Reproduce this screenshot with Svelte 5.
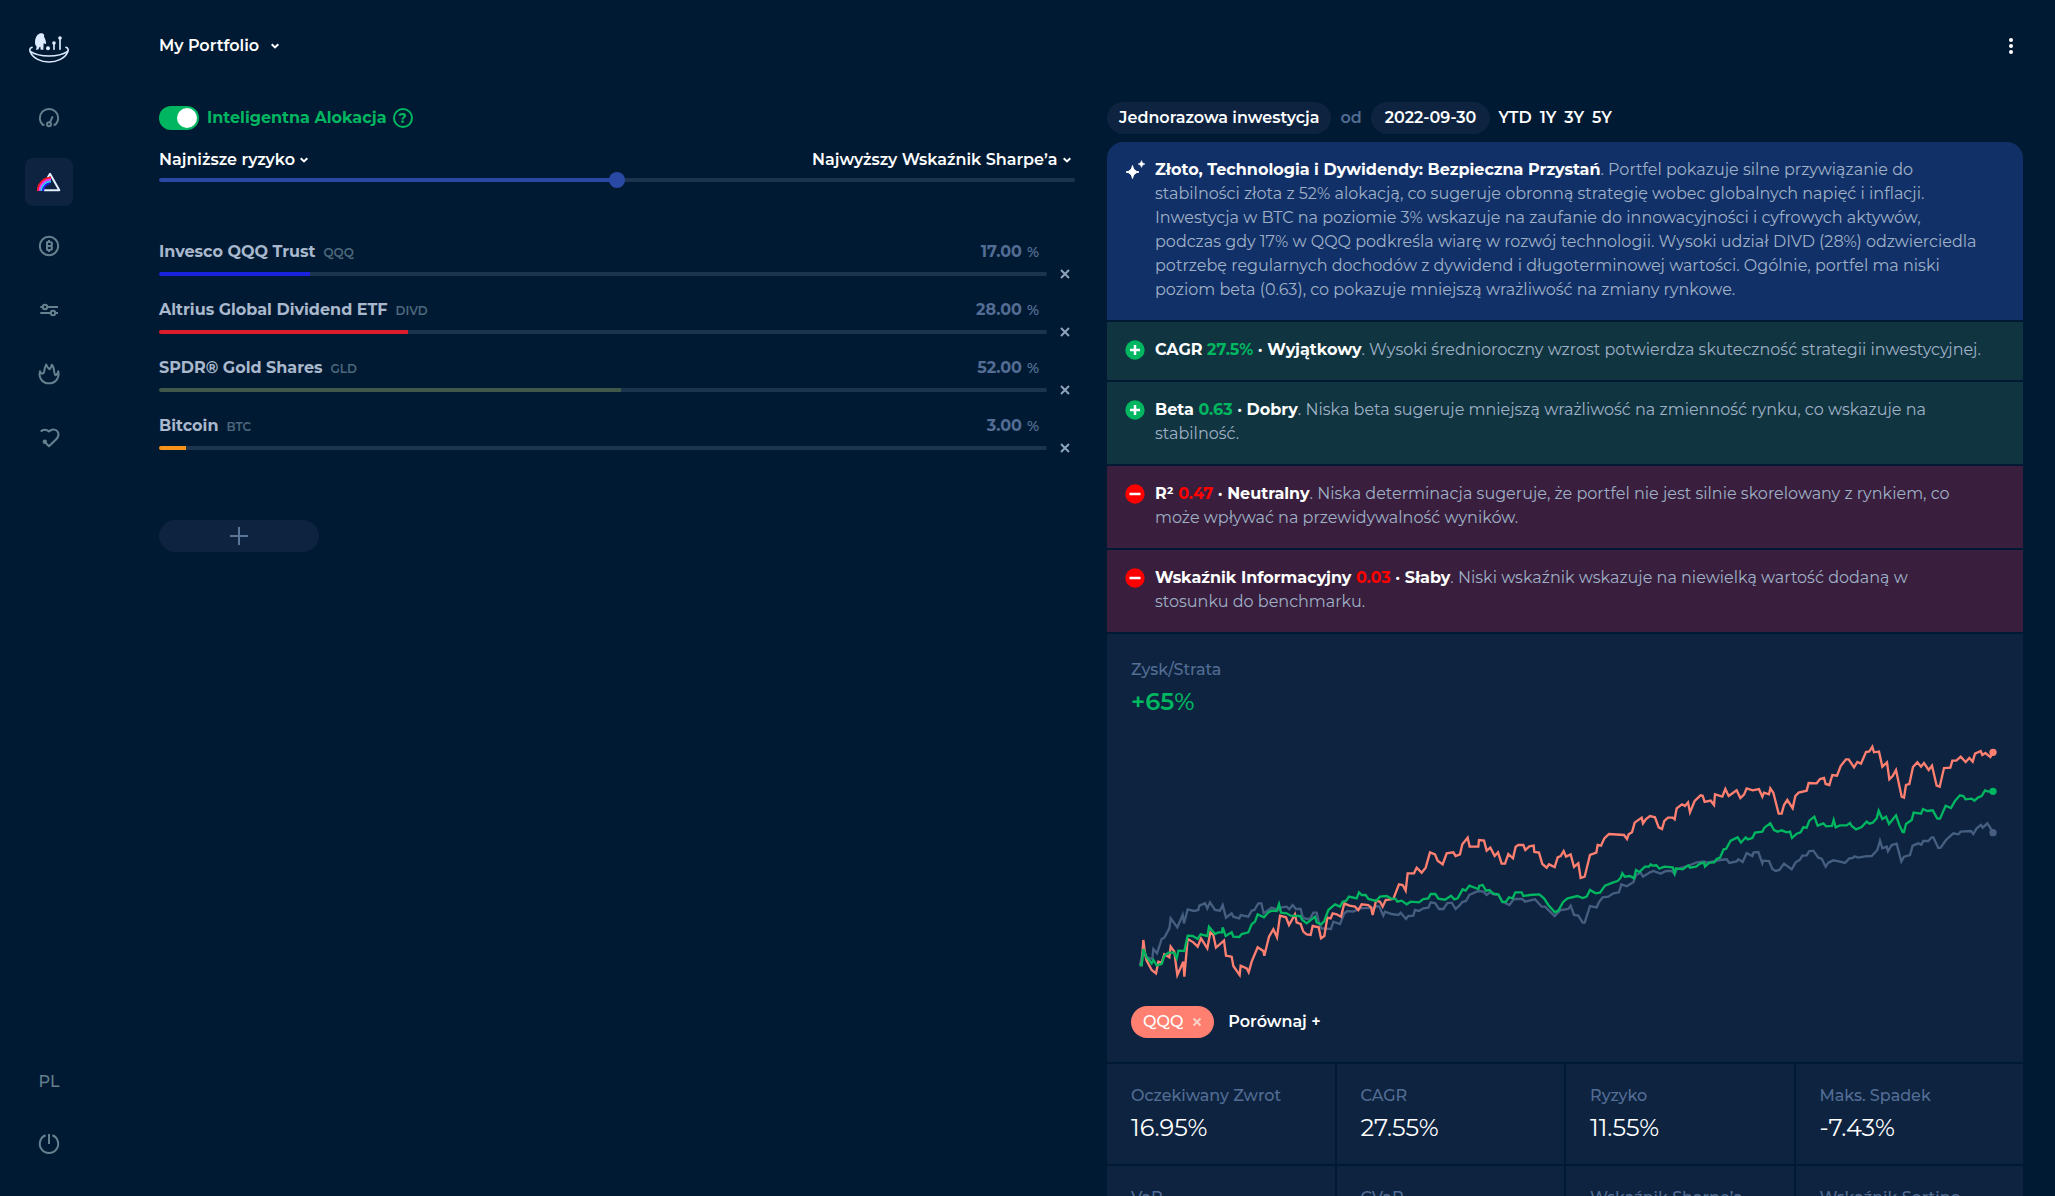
<script>
  let smart = $state(true);
  let risk = $state(50);

  let assets = $state([
    { name: 'Invesco QQQ Trust', ticker: 'QQQ', share: 17, color: '#1a22dd' },
    { name: 'Altrius Global Dividend ETF', ticker: 'DIVD', share: 28, color: '#dd1c2c' },
    { name: 'SPDR® Gold Shares', ticker: 'GLD', share: 52, color: '#3f5847' },
    { name: 'Bitcoin', ticker: 'BTC', share: 3, color: '#f7931a' }
  ]);

  const ranges = ['YTD', '1Y', '3Y', '5Y'];

  const summary = [
    'stabilności złota z 52% alokacją, co sugeruje obronną strategię wobec globalnych napięć i inflacji.',
    'Inwestycja w BTC na poziomie 3% wskazuje na zaufanie do innowacyjności i cyfrowych aktywów,',
    'podczas gdy 17% w QQQ podkreśla wiarę w rozwój technologii. Wysoki udział DIVD (28%) odzwierciedla',
    'potrzebę regularnych dochodów z dywidend i długoterminowej wartości. Ogólnie, portfel ma niski',
    'poziom beta (0.63), co pokazuje mniejszą wrażliwość na zmiany rynkowe.'
  ];

  const insights = [
    { good: true, metric: 'CAGR', value: '27.5%', grade: 'Wyjątkowy', first: 'Wysoki średnioroczny wzrost potwierdza skuteczność strategii inwestycyjnej.', second: '' },
    { good: true, metric: 'Beta', value: '0.63', grade: 'Dobry', first: 'Niska beta sugeruje mniejszą wrażliwość na zmienność rynku, co wskazuje na', second: 'stabilność.' },
    { good: false, metric: 'R²', value: '0.47', grade: 'Neutralny', first: 'Niska determinacja sugeruje, że portfel nie jest silnie skorelowany z rynkiem, co', second: 'może wpływać na przewidywalność wyników.' },
    { good: false, metric: 'Wskaźnik Informacyjny', value: '0.03', grade: 'Słaby', first: 'Niski wskaźnik wskazuje na niewielką wartość dodaną w', second: 'stosunku do benchmarku.' }
  ];

  const metrics = [
    { label: 'Oczekiwany Zwrot', value: '16.95%' },
    { label: 'CAGR', value: '27.55%' },
    { label: 'Ryzyko', value: '11.55%' },
    { label: 'Maks. Spadek', value: '-7.43%' },
    { label: 'VaR', value: '' },
    { label: 'CVaR', value: '' },
    { label: 'Wskaźnik Sharpe’a', value: '' },
    { label: 'Wskaźnik Sortino', value: '' }
  ];

  const series = [
    {
      color: '#465f80', end: [2619, 338],
      points: '60,735 70,690 80,712 97,717 100,687 111,700 125,657 133,653 148,625 152,595 172,622 188,585 192,610 203,568 222,573 235,570 238,557 255,550 262,565 270,547 285,570 300,572 308,555 318,593 335,580 340,590 358,595 362,585 385,590 395,572 403,570 415,550 424,550 431,580 455,563 475,570 485,562 500,560 508,568 518,555 528,567 542,567 548,592 560,597 570,597 580,578 590,578 597,610 605,625 633,627 640,605 660,612 673,580 682,573 700,575 720,565 765,563 770,558 778,560 790,587 795,575 815,582 835,585 842,578 858,597 865,588 880,587 885,570 897,573 910,565 925,563 932,547 945,549 957,567 970,567 982,549 995,548 1007,567 1018,557 1027,546 1038,543 1048,525 1075,513 1090,515 1100,525 1110,517 1120,523 1135,525 1147,545 1168,555 1182,537 1207,537 1215,545 1245,538 1265,560 1275,560 1304,588 1322,570 1345,567 1352,557 1362,585 1375,587 1388,608 1394,608 1410,558 1430,562 1436,548 1448,532 1465,530 1480,520 1497,517 1504,493 1520,499 1540,487 1548,465 1562,458 1569,470 1590,457 1600,453 1622,461 1638,453 1655,453 1664,463 1670,448 1710,435 1730,427 1752,424 1760,428 1800,420 1820,418 1828,429 1850,424 1855,418 1868,426 1880,399 1897,408 1901,397 1915,396 1927,430 1930,422 1947,423 1957,447 1967,453 1978,450 1992,431 2015,448 2027,427 2040,419 2047,407 2060,406 2067,394 2080,392 2095,413 2105,416 2117,440 2125,428 2140,421 2160,425 2175,429 2187,416 2198,414 2203,409 2215,413 2235,409 2255,408 2272,390 2280,362 2287,385 2300,380 2304,394 2315,375 2330,371 2344,425 2352,410 2370,405 2378,377 2395,370 2404,374 2410,363 2425,363 2435,352 2440,352 2455,384 2462,383 2478,360 2500,340 2515,343 2522,335 2553,333 2560,342 2570,325 2583,315 2588,323 2602,310 2612,325 2619,338'
    },
    {
      color: '#ff8070', end: [2619, 97],
      points: '60,735 65,735 70,660 75,700 80,722 95,750 108,760 115,725 125,728 133,703 148,712 152,680 163,695 168,735 172,765 190,725 193,770 203,657 220,667 233,680 243,655 262,685 271,637 280,645 288,683 312,662 318,707 335,710 340,738 359,765 362,737 380,745 386,757 395,725 413,682 430,693 433,707 447,650 460,628 471,652 480,587 498,592 507,615 525,583 530,608 542,612 550,635 560,643 572,645 578,618 596,622 603,655 613,648 622,593 632,595 638,580 650,583 663,590 673,550 688,557 705,560 715,570 725,553 745,555 753,562 758,585 768,542 780,545 788,560 797,540 820,537 837,493 848,495 857,512 863,460 882,460 890,443 905,458 917,443 930,397 945,403 953,422 968,433 980,400 1000,397 1007,408 1020,403 1027,373 1043,353 1049,380 1075,380 1077,360 1092,362 1100,392 1111,383 1124,408 1134,397 1145,431 1155,431 1165,402 1179,415 1187,380 1195,375 1210,375 1216,390 1228,379 1241,377 1243,396 1257,398 1267,432 1280,443 1287,433 1304,441 1313,412 1322,408 1331,393 1338,410 1352,403 1362,441 1375,430 1382,474 1394,470 1410,405 1429,398 1433,375 1443,377 1453,355 1467,342 1512,345 1521,357 1526,343 1536,337 1544,308 1565,293 1569,310 1578,297 1590,288 1605,292 1616,322 1626,327 1633,303 1644,293 1658,293 1664,298 1670,265 1686,253 1695,258 1704,247 1710,277 1724,243 1742,226 1748,227 1754,246 1772,242 1782,255 1785,223 1807,230 1816,207 1826,228 1850,211 1861,234 1872,224 1880,205 1898,211 1917,207 1927,230 1932,218 1947,223 1951,205 1960,218 1976,281 1985,281 1992,255 2002,240 2018,265 2026,228 2036,218 2060,212 2066,189 2090,190 2100,177 2112,174 2117,192 2128,195 2137,165 2151,167 2162,138 2178,118 2186,118 2202,142 2212,126 2223,131 2238,96 2248,94 2257,80 2262,97 2277,95 2287,140 2301,127 2308,178 2318,168 2328,150 2345,230 2352,233 2358,195 2368,192 2379,141 2392,127 2403,140 2412,129 2426,150 2436,137 2450,197 2459,200 2472,144 2491,143 2497,122 2509,122 2522,110 2537,126 2548,114 2558,125 2565,101 2582,93 2587,105 2596,99 2611,111 2619,97'
    },
    {
      color: '#00b660', end: [2619, 214],
      points: '58,735 65,735 70,687 80,712 95,730 100,720 110,736 125,732 133,708 145,698 162,698 170,715 175,692 193,693 203,647 218,648 233,657 242,643 262,648 267,620 285,642 295,637 306,637 308,622 317,648 335,637 340,650 358,651 365,642 385,637 395,613 405,605 413,583 432,592 445,577 455,572 470,573 477,552 483,578 500,580 512,587 540,588 547,600 560,610 585,590 590,607 603,613 613,603 625,570 645,553 660,560 668,545 678,543 687,530 710,535 717,517 725,525 737,525 745,537 768,543 780,530 800,528 812,535 827,537 832,545 845,542 860,553 872,545 897,547 910,537 925,535 932,522 946,522 955,536 975,539 993,527 1003,538 1013,535 1028,508 1037,512 1048,497 1075,507 1078,497 1088,495 1098,512 1108,510 1120,521 1135,523 1147,546 1158,545 1167,532 1178,535 1186,517 1205,517 1210,528 1230,525 1258,523 1272,535 1285,555 1305,577 1315,572 1330,545 1343,535 1372,528 1388,534 1400,530 1410,510 1427,520 1440,518 1455,497 1480,487 1493,483 1502,473 1507,460 1514,470 1530,468 1542,475 1548,450 1558,456 1575,440 1587,440 1592,433 1597,437 1609,436 1618,446 1633,440 1658,442 1664,460 1668,445 1688,448 1705,436 1710,443 1728,440 1740,431 1752,428 1755,440 1768,428 1783,427 1790,417 1800,413 1811,388 1818,387 1832,362 1853,352 1863,368 1877,352 1883,358 1897,354 1905,338 1927,335 1933,323 1951,310 1962,330 1973,335 1985,331 2000,337 2010,335 2016,354 2030,341 2042,337 2050,322 2060,323 2068,302 2083,290 2093,317 2110,310 2118,319 2136,318 2141,300 2147,322 2160,316 2180,316 2190,309 2195,318 2208,328 2225,321 2240,305 2248,311 2258,308 2270,295 2276,272 2287,297 2298,290 2307,312 2315,302 2328,286 2338,315 2348,336 2352,336 2358,312 2375,300 2381,278 2403,281 2409,267 2422,273 2438,271 2452,296 2460,296 2477,257 2493,264 2505,243 2520,226 2530,228 2537,238 2555,236 2563,242 2575,232 2585,228 2595,211 2605,215 2619,214'
    }
  ];
</script>

{#snippet chevron()}
  <svg class="chevron" viewBox="0 0 10 8" aria-hidden="true"><path d="M1.7 2.2 5 5.4 8.3 2.2" /></svg>
{/snippet}

<div class="shell">
  <aside class="side">
    <a class="logo" href="#home" aria-label="Home">
      <svg viewBox="0 0 120 90" aria-hidden="true">
        <g fill="none" stroke="currentColor" stroke-width="5" stroke-linecap="round">
          <path d="M9 43C3 44 1 50 4 57C12 76 36 87 60 87S108 76 116 57C119 50 117 44 111 43" />
          <path d="M5 56C20 66 38 69 60 69S100 66 115 56" />
          <path d="M75 32V49M93 17V49" />
        </g>
        <g fill="currentColor">
          <path d="M18 26C19 11 26 3 35 1C43-1 47 4 45 11C49 18 52 26 51 33L44 31L43 50H35L34 41C31 42 29 45 29 49L21 51L23 41C19 37 18 32 18 26Z" />
          <circle cx="57" cy="46" r="6" /><circle cx="75" cy="30" r="5.500" /><circle cx="93" cy="15" r="5.500" />
        </g>
      </svg>
    </a>
    <nav class="nav" aria-label="Menu">
      <a href="#overview" aria-label="Overview">
        <svg viewBox="0 0 24 24"><path d="M7.500 18.700H5.600A9.200 9.200 0 1 1 18.400 18.700H16.500M13 16.300 15.700 10.300" /><circle cx="12" cy="18.300" r="2" /></svg>
      </a>
      <a class="active" href="#portfolio" aria-label="Portfolio" aria-current="page">
        <svg viewBox="0 0 24 24">
          <path stroke="#e4efff" stroke-width="2" d="M10.500 8 13 3.800 22.300 20.200H7" />
          <path stroke="#ff1725" d="M.8 21A13.200 13.200 0 0 1 14 7.800" />
          <path stroke="#f23cf4" d="M2.600 21A11.400 11.400 0 0 1 14 9.600" />
          <path stroke="#35c8ff" d="M4.400 21A9.600 9.600 0 0 1 14 11.400" />
          <path stroke="#2018e8" d="M6.200 21A7.800 7.800 0 0 1 13 13.200" />
        </svg>
      </a>
      <a href="#crypto" aria-label="Crypto">
        <svg viewBox="0 0 24 24"><circle cx="12" cy="12" r="9.200" /><path d="M10 8H13A2 2 0 0 1 13 12H10M13 12A2 2 0 0 1 13 16H10M10 7.500V16.500M12 6V8M12 16V18" /></svg>
      </a>
      <a href="#filters" aria-label="Filters">
        <svg viewBox="0 0 24 24"><path d="M3.300 9H5.800M10.200 9H21M3.300 15H13.800M18.200 15H21" /><circle cx="8" cy="9" r="2.200" /><circle cx="16" cy="15" r="2.200" /></svg>
      </a>
      <a href="#trending" aria-label="Trending">
        <svg viewBox="0 0 24 24"><path d="M3 9.200C1.300 16 5.500 21.300 12 21.300S22.700 16 21.300 9.200C21 11.500 20.200 12.800 18.500 13.200C17.200 12.800 17.200 9 16.600 6C16.200 4.600 15.500 3.600 14.800 2.700C14.500 4.500 13.800 6 12.500 7.200C11 6 10 4.500 9.200 2.500C8.600 4.400 7.600 5.800 7.400 8C7.300 10 7 11.500 5.500 11.600C4.200 11.600 3.400 10.600 3 9.200Z" /></svg>
      </a>
      <a href="#favourites" aria-label="Favourites">
        <svg viewBox="0 0 24 24"><path d="M3.700 5.500C6 3 9.500 3 12 5.500C15 2.500 20 3 21.300 7C22 9.500 21 11.500 19 13.500L12 20.300 8.500 16.700" /><circle cx="7.800" cy="15.800" r="1.200" fill="currentColor" /></svg>
      </a>
    </nav>
    <div class="side-end">
      <button class="side-button" type="button">PL</button>
      <button class="side-button" type="button" aria-label="Log out">
        <svg viewBox="0 0 24 24"><path d="M8.600 3.300A9.200 9.200 0 1 0 15.400 3.300M12 2V12" /></svg>
      </button>
    </div>
  </aside>

  <main>
    <header class="topbar">
      <label class="picker wide">
        <select aria-label="Portfolio"><option>My Portfolio</option></select>
        {@render chevron()}
      </label>
      <button class="more" type="button" aria-label="More">
        <svg viewBox="0 0 24 24" fill="currentColor"><circle cx="12" cy="6" r="2" /><circle cx="12" cy="12" r="2" /><circle cx="12" cy="18" r="2" /></svg>
      </button>
    </header>

    <div class="columns">
      <section class="allocation">
        <div class="smart">
          <input id="smart" class="switch" type="checkbox" bind:checked={smart} />
          <label for="smart">Inteligentna Alokacja</label>
          <button class="help" type="button">?</button>
        </div>

        <div class="goals">
          <label class="picker">
            <select aria-label="Minimum"><option>Najniższe ryzyko</option></select>
            {@render chevron()}
          </label>
          <label class="picker">
            <select aria-label="Maximum"><option>Najwyższy Wskaźnik Sharpe’a</option></select>
            {@render chevron()}
          </label>
        </div>
        <input class="range main-range" type="range" min="0" max="100" bind:value={risk} style="--fill: {risk}%" aria-label="Ryzyko" />

        <ul class="assets">
          {#each assets as asset}
            <li>
              <div class="asset-head">
                <span class="asset-name">{asset.name}</span>
                <span class="ticker">{asset.ticker}</span>
                <input class="share" type="text" value={asset.share.toFixed(2)} aria-label="{asset.name} %" />
                <span class="percent">%</span>
              </div>
              <div class="asset-bar">
                <input class="range" type="range" min="0" max="100" bind:value={asset.share} style="--fill: {asset.share}%; --tone: {asset.color}" aria-label={asset.name} />
                <button class="remove" type="button" aria-label="Remove {asset.name}">
                  <svg viewBox="0 0 20 20"><path d="M6 6 14 14M14 6 6 14" /></svg>
                </button>
              </div>
            </li>
          {/each}
        </ul>

        <button class="add" type="button" aria-label="Add">
          <svg viewBox="0 0 20 20"><path d="M10 1V19M1 10H19" /></svg>
        </button>
      </section>

      <section class="report">
        <div class="filters">
          <button class="pill" type="button">Jednorazowa inwestycja</button>
          <span class="from">od</span>
          <button class="pill date" type="button">2022-09-30</button>
          <div class="ranges">
            {#each ranges as item}
              <button type="button">{item}</button>
            {/each}
          </div>
        </div>

        <div class="panels">
          <article class="note summary">
            <svg class="mark" viewBox="0 0 20 20" fill="#fff" aria-hidden="true">
              <path d="M7.500 5.500Q8.300 11.200 14 12Q8.300 12.800 7.500 18.500Q6.700 12.800 1 12Q6.700 11.200 7.500 5.500Z" stroke="#fff" />
              <path d="M16.500.500Q17 3.500 20 4Q17 4.500 16.500 7.500Q16 4.500 13 4Q16 3.500 16.500.500Z" stroke="#fff" stroke-width=".5" />
            </svg>
            <p>
              <strong>Złoto, Technologia i Dywidendy: Bezpieczna Przystań</strong>. Portfel pokazuje silne przywiązanie do
              {#each summary as line}<br />{line}{/each}
            </p>
          </article>

          {#each insights as item}
            <article class="note" class:good={item.good} class:bad={!item.good}>
              <svg class="mark" viewBox="0 0 20 20" aria-hidden="true">
                <circle cx="10" cy="10" r="9.700" fill="currentColor" />
                <path d={item.good ? 'M10 5V15M5 10H15' : 'M4.500 10H15.500'} stroke="#fff" stroke-width="2.500" />
              </svg>
              <p>
                <strong>{item.metric} <em>{item.value}</em> · {item.grade}</strong>. {item.first}
                {#if item.second}<br />{item.second}{/if}
              </p>
            </article>
          {/each}

          <article class="profit">
            <h2>Zysk/Strata</h2>
            <p class="gain"><b>+65</b>%</p>
            <svg class="chart" viewBox="33 0 2604 840" role="img" aria-label="Zysk/Strata">
              {#each series as line}
                <polyline points={line.points} stroke={line.color} />
                <circle cx={line.end[0]} cy={line.end[1]} r="11" fill={line.color} />
              {/each}
            </svg>
            <div class="compare">
              <button class="chip" type="button">
                QQQ
                <svg viewBox="0 0 10 10"><path d="M1.500 1.500 8.500 8.500M8.500 1.500 1.500 8.500" /></svg>
              </button>
              <button class="compare-add" type="button">Porównaj +</button>
            </div>
          </article>

          <dl class="metrics">
            {#each metrics as metric}
              <div>
                <dt>{metric.label}</dt>
                <dd>{metric.value}</dd>
              </div>
            {/each}
          </dl>
        </div>
      </section>
    </div>
  </main>
</div>

<style>
  :global(body) {
    margin: 0;
    background: #001a33;
  }
  .shell {
    display: flex;
    height: 100vh;
    overflow: hidden;
    background: #001a33;
    color: #fff;
    font-family: Montserrat, Inter, 'Open Sans', sans-serif;
    font-size: 16px;
    line-height: 24px;
  }
  svg {
    display: block;
    flex: none;
  }
  button,
  input,
  select {
    margin: 0;
    padding: 0;
    border: 0;
    background: none;
    color: inherit;
    font: inherit;
  }
  button {
    cursor: pointer;
  }
  a {
    color: inherit;
  }

  .side {
    display: flex;
    flex: none;
    flex-direction: column;
    align-items: center;
    width: 98px;
    padding-bottom: 28px;
    box-sizing: border-box;
    color: #67808f;
    font-weight: 500;
  }
  .logo {
    height: 61px;
    padding-top: 33px;
    color: #dcebff;
  }
  .logo svg {
    width: 40px;
    height: 30px;
  }
  .nav {
    display: flex;
    flex-direction: column;
    gap: 16px;
  }
  .nav a,
  .side-button {
    display: grid;
    place-items: center;
    width: 48px;
    height: 48px;
    border-radius: 8px;
  }
  .nav a.active {
    background: #0d2340;
  }
  .nav svg,
  .side-button svg {
    width: 24px;
    height: 24px;
    fill: none;
    stroke: currentColor;
    stroke-width: 2;
    stroke-linejoin: round;
  }
  .side-end {
    display: flex;
    flex-direction: column;
    gap: 14px;
    margin-top: auto;
  }

  main {
    flex: 1;
    min-width: 0;
    padding: 0 32px 0 61px;
    overflow-y: auto;
    scrollbar-width: none;
  }
  .topbar {
    display: flex;
    align-items: center;
    justify-content: space-between;
    height: 92px;
  }
  .picker {
    display: inline-flex;
    align-items: center;
    gap: 4px;
    font-weight: 600;
  }
  .picker.wide {
    gap: 10px;
  }
  .picker select {
    appearance: none;
    height: 24px;
    outline: none;
  }
  .chevron {
    width: 10px;
    height: 8px;
    fill: none;
    stroke: #fff;
    stroke-width: 2;
  }
  .more svg {
    width: 24px;
    height: 24px;
  }

  .columns {
    display: grid;
    grid-template-columns: minmax(0, 1fr) minmax(0, 1fr);
    gap: 32px;
  }
  .allocation {
    padding-top: 14px;
  }
  .smart {
    display: flex;
    align-items: center;
    height: 24px;
    color: #00b660;
    font-weight: 700;
  }
  .switch {
    appearance: none;
    width: 40px;
    height: 24px;
    margin-right: 8px;
    padding: 2px;
    box-sizing: border-box;
    border-radius: 12px;
    background: #1c344e;
  }
  .switch::before {
    content: '';
    display: block;
    width: 20px;
    height: 20px;
    border-radius: 50%;
    background: #fff;
  }
  .switch:checked {
    padding-left: 18px;
    background: #00b660;
  }
  .help {
    width: 20px;
    height: 20px;
    margin-left: 6px;
    border: 2px solid currentColor;
    border-radius: 50%;
    font-size: 14px;
    line-height: 16px;
  }
  .goals {
    display: flex;
    justify-content: space-between;
    height: 24px;
    margin-top: 18px;
    padding-right: 3px;
  }
  .range {
    --tone: #2a49a5;
    appearance: none;
    display: block;
    width: 100%;
    height: 4px;
    border-radius: 2px;
    background: linear-gradient(to right, var(--tone) var(--fill), #1c344e var(--fill));
  }
  .range::-webkit-slider-thumb {
    appearance: none;
    width: 0;
    height: 0;
  }
  .main-range {
    margin-top: 6px;
  }
  .main-range::-webkit-slider-thumb {
    width: 16px;
    height: 16px;
    border-radius: 50%;
    background: #2a49a5;
  }

  .assets {
    display: grid;
    gap: 14px;
    margin: 58px 0 0;
    padding: 0;
    list-style: none;
  }
  .asset-head {
    display: flex;
    align-items: baseline;
    height: 24px;
    padding-right: 36px;
  }
  .asset-name {
    color: #a9b8cc;
    font-weight: 700;
  }
  .ticker {
    margin-left: 8px;
    color: #4c687c;
    font-size: 12px;
    font-weight: 600;
  }
  .share {
    width: 80px;
    margin-left: auto;
    color: #536d94;
    font-weight: 700;
    text-align: right;
  }
  .percent {
    margin-left: 5px;
    color: #536d94;
    font-size: 14px;
    font-weight: 600;
  }
  .asset-bar {
    display: flex;
    align-items: center;
    gap: 8px;
    height: 20px;
  }
  .asset-bar .range {
    flex: 1;
    min-width: 0;
  }
  .remove {
    color: #8fa3bb;
  }
  .remove svg {
    width: 20px;
    height: 20px;
    stroke: currentColor;
    stroke-width: 2;
  }
  .add {
    display: grid;
    place-items: center;
    width: 160px;
    height: 32px;
    margin-top: 62px;
    border-radius: 16px;
    background: #0d2340;
    color: #5a7699;
  }
  .add svg {
    width: 20px;
    height: 20px;
    stroke: currentColor;
    stroke-width: 2;
  }

  .report {
    padding-top: 10px;
  }
  .filters {
    display: flex;
    align-items: center;
    height: 32px;
    margin-bottom: 8px;
    font-weight: 600;
  }
  .pill {
    height: 32px;
    padding: 0 12px;
    border-radius: 16px;
    background: #0d2340;
  }
  .pill.date {
    padding: 0 14px;
  }
  .from {
    padding: 0 9px;
    color: #536d94;
  }
  .ranges {
    display: flex;
    gap: 8px;
    margin-left: 8px;
  }
  .panels {
    display: grid;
    grid-template-columns: minmax(0, 1fr);
    gap: 2px;
    overflow: hidden;
    border-radius: 16px 16px 0 0;
  }
  .note {
    display: flex;
    gap: 10px;
    padding: 16px 0 18px 18px;
    color: #9fb0c6;
  }
  .note p {
    margin: 0;
    white-space: nowrap;
  }
  .note strong {
    color: #fff;
    font-weight: 700;
  }
  .note em {
    font-style: normal;
  }
  .mark {
    width: 20px;
    height: 20px;
    margin-top: 2px;
  }
  .summary {
    background: #123068;
  }
  .good {
    background: #113540;
  }
  .good .mark,
  .good em {
    color: #00b660;
  }
  .bad {
    background: #391f3d;
  }
  .bad .mark,
  .bad em {
    color: #ff0000;
  }

  .profit {
    padding: 24px;
    background: #0d2340;
  }
  h2,
  dt {
    margin: 0;
    color: #536d94;
    font-size: 16px;
    font-weight: 500;
    line-height: 24px;
  }
  .gain {
    margin: 4px 0 2px;
    color: #00b660;
    font-size: 24px;
    font-weight: 500;
    line-height: 32px;
  }
  .gain b {
    font-weight: 600;
  }
  .chart {
    width: 100%;
    fill: none;
    stroke-width: 7;
  }
  .compare {
    display: flex;
    align-items: center;
    gap: 14px;
    margin-top: 6px;
    font-weight: 600;
  }
  .chip {
    display: flex;
    align-items: center;
    gap: 9px;
    height: 32px;
    padding: 0 12px;
    border-radius: 16px;
    background: #ff8070;
    font-weight: 500;
  }
  .chip svg {
    width: 10px;
    height: 10px;
    stroke: #ffd0c8;
    stroke-width: 2;
  }
  .metrics {
    display: grid;
    grid-template-columns: repeat(4, minmax(0, 1fr));
    gap: 2px;
    margin: 0;
  }
  .metrics div {
    min-height: 60px;
    padding: 20px 24px;
    background: #0d2340;
  }
  dd {
    margin: 4px 0 0;
    font-size: 24px;
    line-height: 32px;
  }
</style>
